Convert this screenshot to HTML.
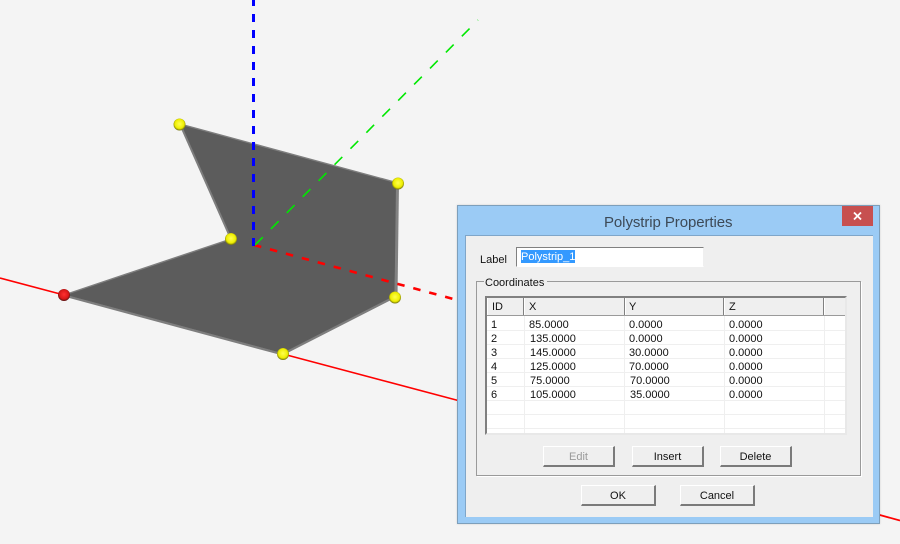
<!DOCTYPE html>
<html><head><meta charset="utf-8"><style>
html,body{margin:0;padding:0;width:900px;height:544px;overflow:hidden;background:#f4f4f4;font-family:"Liberation Sans",sans-serif;font-size:11px;color:#111}
.a{position:absolute;box-sizing:border-box}
.t{position:absolute;white-space:nowrap;line-height:14px;height:14px}
.btn{position:absolute;box-sizing:border-box;background:#efefef;border-style:solid;border-width:1px 2px 2px 1px;border-color:#fff #7a7a7a #7a7a7a #fff;text-align:center;line-height:20px}
.h{position:absolute;top:298px;height:17px;box-sizing:border-box;background:#efefef;border-right:1px solid #808080;border-left:1px solid #fff}
.hl{position:absolute;left:487px;width:358px;height:1px;background:#efefef}
.vl{position:absolute;top:316px;width:1px;height:117px;background:#efefef}
</style></head><body>
<svg class="a" style="left:0;top:0" width="900" height="544" viewBox="0 0 900 544">
<defs>
<radialGradient id="y" cx="50%" cy="45%" r="55%"><stop offset="0" stop-color="#ffff50"/><stop offset=".7" stop-color="#eeee00"/><stop offset="1" stop-color="#6a6a10"/></radialGradient>
<radialGradient id="r" cx="50%" cy="45%" r="55%"><stop offset="0" stop-color="#ff3030"/><stop offset=".7" stop-color="#d81818"/><stop offset="1" stop-color="#501010"/></radialGradient>
</defs>
<line x1="0" y1="278" x2="64" y2="295" stroke="#f00" stroke-width="1.6"/>
<line x1="283" y1="354" x2="460" y2="401" stroke="#f00" stroke-width="1.6"/>
<line x1="878" y1="514.500" x2="900" y2="520.500" stroke="#f00" stroke-width="1.800"/>
<polygon points="64,295 283,354 395,297 398,183 180,124 231,239" fill="#5c5c5c" stroke="#7e7e7e" stroke-width="1.400"/>
<path d="M64 295.500L283 354.500M283 354L394.500 297" fill="none" stroke="#7e7e7e" stroke-width="2.200"/>
<path d="M396 297L397.500 184" fill="none" stroke="#828282" stroke-width="3"/>
<path d="M180 124L231 239" fill="none" stroke="#7e7e7e" stroke-width="2"/>
<line x1="254" y1="245" x2="457" y2="300" stroke="#f00" stroke-width="2.600" stroke-dasharray="7.500 9"/>
<line x1="255" y1="245" x2="478" y2="20" stroke="#00e800" stroke-width="1.600" stroke-dasharray="11 11.600"/>
<line x1="253.500" y1="246" x2="253.500" y2="0" stroke="#00f" stroke-width="3" stroke-dasharray="8 8"/>
<circle cx="179.500" cy="124.500" r="6" fill="url(#y)"/>
<circle cx="398" cy="183.500" r="6" fill="url(#y)"/>
<circle cx="231" cy="239" r="6" fill="url(#y)"/>
<circle cx="395" cy="297.500" r="6" fill="url(#y)"/>
<circle cx="283" cy="354" r="6" fill="url(#y)"/>
<circle cx="64" cy="295" r="6" fill="url(#r)"/>
</svg>

<div class="a" style="left:457px;top:205px;width:423px;height:319px;background:#9bcbf5;border:1px solid #7d9fbb;box-shadow:0 0 2px rgba(0,0,0,.15)"></div>
<div class="a" style="left:465px;top:235px;width:408px;height:282px;background:#efefef;border:1px solid #7fa6c9;border-width:1px 0 0 1px"></div>
<div class="a" style="left:842px;top:206px;width:31px;height:20px;background:#c75050"></div>
<svg class="a" style="left:852px;top:211px" width="11" height="10"><path d="M2 1.500L9 8.500M9 1.500L2 8.500" stroke="#fff" stroke-width="1.800"/></svg>
<div class="t" style="left:604px;top:214px;font-size:15px;line-height:17px;height:17px;color:#3d4a57;letter-spacing:-.08px">Polystrip Properties</div>

<div class="t" style="left:480px;top:253px">Label</div>
<div class="a" style="left:516px;top:247px;width:188px;height:20px;background:#fff;border:1px solid;border-color:#808080 #efefef #fff #808080"></div>
<div class="a" style="left:521px;top:250px;width:54px;height:13px;background:#3399ff"></div>
<div class="t" style="left:521px;top:250px;color:#fff">Polystrip_1</div>

<div class="a" style="left:476px;top:281px;width:385px;height:195px;border:1px solid #9a9a9a;box-shadow:1px 1px 0 #fff"></div>
<div class="a" style="left:484px;top:275px;width:63px;height:14px;background:#efefef"></div>
<div class="t" style="left:485px;top:276px">Coordinates</div>

<div class="a" style="left:485px;top:296px;width:362px;height:139px;background:#fff;border-style:solid;border-width:2px 2px 2px 2px;border-color:#808080 #e8e8e8 #e8e8e8 #808080"></div>
<div class="h" style="left:487px;width:37px"></div>
<div class="h" style="left:524px;width:101px"></div>
<div class="h" style="left:625px;width:99px"></div>
<div class="h" style="left:724px;width:100px"></div>
<div class="a" style="left:824px;top:298px;width:21px;height:17px;background:#efefef;border-left:1px solid #fff"></div>
<div class="a" style="left:487px;top:315px;width:358px;height:1px;background:#9a9a9a"></div>

<div class="hl" style="top:330px"></div><div class="hl" style="top:344px"></div><div class="hl" style="top:358px"></div><div class="hl" style="top:372px"></div><div class="hl" style="top:386px"></div><div class="hl" style="top:400px"></div><div class="hl" style="top:414px"></div><div class="hl" style="top:428px"></div>
<div class="vl" style="left:524px"></div><div class="vl" style="left:624px"></div><div class="vl" style="left:724px"></div><div class="vl" style="left:824px"></div>

<div class="t" style="left:492px;top:300px">ID</div>
<div class="t" style="left:529px;top:300px">X</div>
<div class="t" style="left:629px;top:300px">Y</div>
<div class="t" style="left:729px;top:300px">Z</div>

<div class="t" style="left:491px;top:318px">1</div><div class="t" style="left:529px;top:318px">85.0000</div><div class="t" style="left:629px;top:318px">0.0000</div><div class="t" style="left:729px;top:318px">0.0000</div>
<div class="t" style="left:491px;top:332px">2</div><div class="t" style="left:530px;top:332px">135.0000</div><div class="t" style="left:629px;top:332px">0.0000</div><div class="t" style="left:729px;top:332px">0.0000</div>
<div class="t" style="left:491px;top:346px">3</div><div class="t" style="left:530px;top:346px">145.0000</div><div class="t" style="left:629px;top:346px">30.0000</div><div class="t" style="left:729px;top:346px">0.0000</div>
<div class="t" style="left:491px;top:360px">4</div><div class="t" style="left:530px;top:360px">125.0000</div><div class="t" style="left:629px;top:360px">70.0000</div><div class="t" style="left:729px;top:360px">0.0000</div>
<div class="t" style="left:491px;top:374px">5</div><div class="t" style="left:530px;top:374px">75.0000</div><div class="t" style="left:630px;top:374px">70.0000</div><div class="t" style="left:729px;top:374px">0.0000</div>
<div class="t" style="left:491px;top:388px">6</div><div class="t" style="left:530px;top:388px">105.0000</div><div class="t" style="left:630px;top:388px">35.0000</div><div class="t" style="left:729px;top:388px">0.0000</div>

<div class="btn" style="left:543px;top:446px;width:72px;height:21px;color:#9a9a9a">Edit</div>
<div class="btn" style="left:632px;top:446px;width:72px;height:21px">Insert</div>
<div class="btn" style="left:720px;top:446px;width:72px;height:21px">Delete</div>
<div class="btn" style="left:581px;top:485px;width:75px;height:21px">OK</div>
<div class="btn" style="left:680px;top:485px;width:75px;height:21px">Cancel</div>
</body></html>
